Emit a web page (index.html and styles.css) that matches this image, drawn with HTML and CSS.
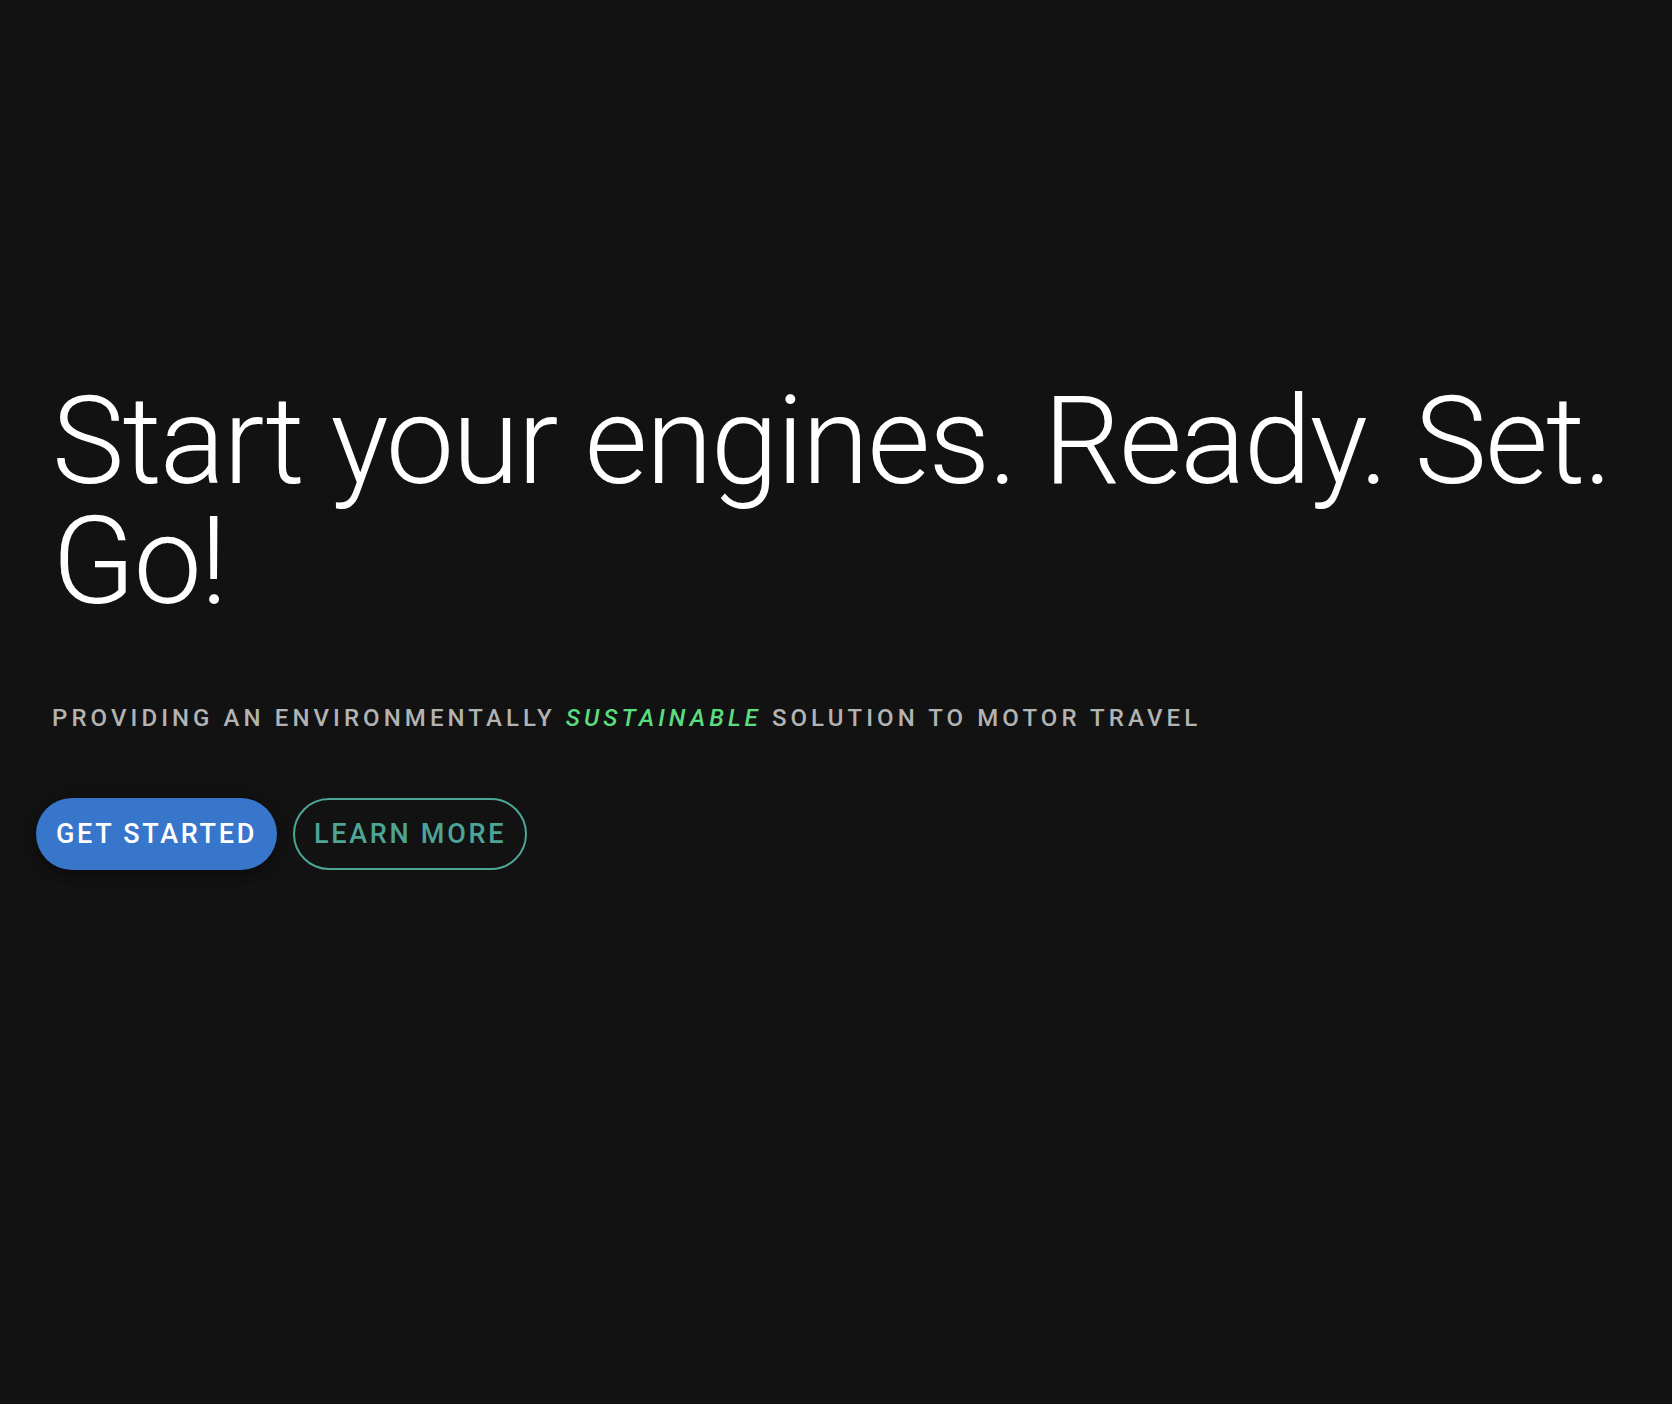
FILE: index.html
```html
<!DOCTYPE html>
<html lang="en">
<head>
<meta charset="utf-8">
<title>Start your engines</title>
<link rel="stylesheet" href="styles.css">
</head>
<body>
<main class="hero">
  <h1 class="hero-title">Start your engines. Ready. Set. Go!</h1>
  <p class="hero-sub">Providing an environmentally <em class="accent">sustainable</em> solution to motor travel</p>
  <div class="actions">
    <button class="btn btn-primary">Get started</button>
    <button class="btn btn-outline">Learn more</button>
  </div>
</main>
</body>
</html>
```
FILE: styles.css
```css
html, body {
  margin: 0;
  padding: 0;
  background: #121212;
  height: 100%;
}
body {
  font-family: Roboto, "Liberation Sans", sans-serif;
  color: #fff;
}
.hero {
  display: flex;
  flex-direction: column;
  align-items: flex-start;
  padding: 382px 52px 0 52px;
}
.hero-title {
  margin: 0;
  font-size: 122px;
  line-height: 120px;
  font-weight: 300;
  letter-spacing: -0.01562em;
  color: #fff;
}
.hero-sub {
  margin: 80px 0 0 0;
  font-size: 24px;
  line-height: 32px;
  font-weight: 500;
  letter-spacing: 0.17em;
  text-transform: uppercase;
  color: #b3b3b3;
}
.accent {
  color: #5cdc7f;
  font-style: italic;
  font-weight: 500;
}
.actions {
  display: flex;
  gap: 16px;
  margin: 64px 0 0 -16px;
}
.btn {
  height: 72px;
  padding: 0 20px;
  border-radius: 36px;
  font-family: Roboto, "Liberation Sans", sans-serif;
  font-size: 27px;
  font-weight: 500;
  letter-spacing: 0.1em;
  text-transform: uppercase;
  cursor: pointer;
  box-sizing: border-box;
}
.btn-primary {
  background: #3776cb;
  color: #fff;
  border: none;
  box-shadow: 0 3px 5px -1px rgba(0,0,0,0.2), 0 6px 10px 0 rgba(0,0,0,0.14), 0 1px 18px 0 rgba(0,0,0,0.12);
}
.btn-outline {
  background: transparent;
  color: #4da596;
  border: 2px solid #4da596;
  padding: 0 19px;
}
```
